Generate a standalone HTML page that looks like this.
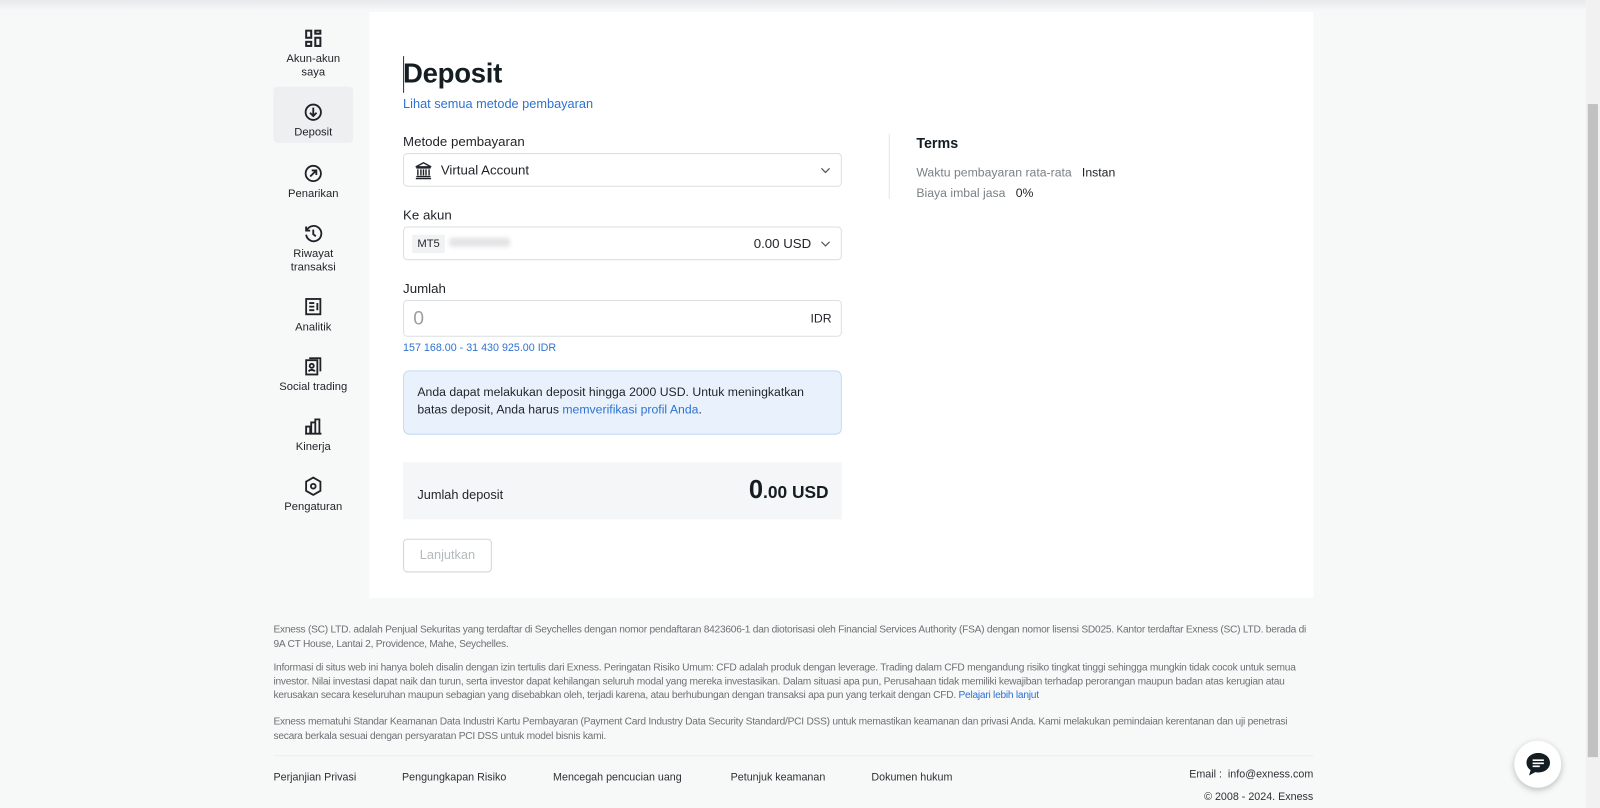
<!DOCTYPE html>
<html><head><meta charset="utf-8">
<style>
*{box-sizing:border-box;margin:0;padding:0}
body{width:1600px;height:808px;overflow:hidden;background:#f7f8f8;font-family:"Liberation Sans",sans-serif;color:#1f2328;position:relative}
#w{position:absolute;left:0;top:0;width:1568px;height:792px;transform:scale(1.0204);transform-origin:0 0}
.topbar{position:absolute;left:0;top:0;width:1554px;height:10px;background:linear-gradient(#e6e8e9,#f7f8f8)}
.scroll{position:absolute;right:0;top:0;width:14px;height:792px;background:#f1f1f1}
.thumb{position:absolute;right:2px;top:102px;width:10px;height:640px;background:#c1c1c1}
.side{position:absolute;left:268px;top:21px;width:78px}
.item{text-align:center;font-size:11px;color:#1f2328;line-height:13px;border-radius:4px;position:absolute;left:0;width:78px}
.item svg{display:block;margin:0 auto 5px}
.card{position:absolute;left:362px;top:12px;width:925px;height:574px;background:#fff}
h1{position:absolute;left:33px;top:45px;font-size:27px;font-weight:bold;color:#141d22;letter-spacing:-0.3px}
.caret{position:absolute;left:33px;top:43px;width:1px;height:36px;background:#333}
.link{color:#2e72d2}
.lbl{position:absolute;left:33px;font-size:13px;color:#1f2328}
.field{position:absolute;left:33px;width:430px;border:1px solid #dcdfe1;border-radius:4px;background:#fff}
.chev{position:absolute;right:10px;top:12px}
.terms{position:absolute;left:509px;top:119px;border-left:1px solid #e3e5e6;padding-left:26px;height:64px;font-size:12px;color:#7b8185}
.terms b{display:block;font-size:14px;color:#141d22;margin-bottom:14px;margin-top:1px}
.terms span{color:#1f2328}
.foot{position:absolute;left:268px;font-size:10px;color:#6c7175;line-height:13.5px;white-space:nowrap;letter-spacing:-0.25px}
.fl{position:absolute;top:756px;font-size:10.5px;color:#2d3236}
</style></head><body>
<div id="w">
<div class="topbar"></div>
<div class="scroll"><div class="thumb"></div></div>

<div class="side">
 <div class="item" style="top:8px"><svg width="16" height="18" viewBox="0 0 16 18" fill="none" stroke="#1f2328" stroke-width="2"><rect x="1" y="1" width="5" height="7"/><rect x="10" y="1" width="5" height="3"/><rect x="1" y="12" width="5" height="4"/><rect x="10" y="8" width="5" height="8"/></svg>Akun-akun<br>saya</div>
 <div class="item" style="top:64px;height:55px;background:#edeff0;padding-top:16px"><svg width="18" height="18" viewBox="0 0 18 18" fill="none" stroke="#1f2328" stroke-width="1.8"><circle cx="9" cy="9" r="7.5"/><path d="M9 4.5v8M5.8 9.5L9 12.7 12.2 9.5"/></svg>Deposit</div>
 <div class="item" style="top:140px"><svg width="18" height="18" viewBox="0 0 18 18" fill="none" stroke="#1f2328" stroke-width="1.8"><circle cx="9" cy="9" r="7.5"/><path d="M6 12L12 6M7.5 6H12v4.5"/></svg>Penarikan</div>
 <div class="item" style="top:199px"><svg width="18" height="18" viewBox="0 0 18 18" fill="none" stroke="#1f2328" stroke-width="1.8"><path d="M2.5 6A7.5 7.5 0 1 1 2 10"/><path d="M2 2v4h4M9 5v4.5l2.5 2"/></svg>Riwayat<br>transaksi</div>
 <div class="item" style="top:271px"><svg width="16" height="18" viewBox="0 0 16 18" fill="none" stroke="#1f2328" stroke-width="1.8"><rect x="1" y="1" width="14" height="15"/><path d="M4 5h5M4 8.5h5M4 12h5M12 5v7"/></svg>Analitik</div>
 <div class="item" style="top:329px"><svg width="16" height="18" viewBox="0 0 16 18" fill="none" stroke="#1f2328" stroke-width="1.8"><rect x="1" y="3" width="11" height="14"/><path d="M4 1h11v13"/><circle cx="6.5" cy="8.5" r="2"/><path d="M3.5 14c1-2 5-2 6 0"/></svg>Social trading</div>
 <div class="item" style="top:388px"><svg width="18" height="18" viewBox="0 0 18 18" fill="none" stroke="#1f2328" stroke-width="1.8"><path d="M1 16h16M2 16V9h4v7M7 16V5h4v11M11 16V2h4v14"/></svg>Kinerja</div>
 <div class="item" style="top:446px"><svg width="18" height="19" viewBox="0 0 18 19" fill="none" stroke="#1f2328" stroke-width="1.8"><path d="M9 1l7 4v9l-7 4-7-4V5z"/><circle cx="9" cy="9.5" r="2.3"/></svg>Pengaturan</div>
</div>

<div class="card">
 <div class="caret"></div>
 <h1>Deposit</h1>
 <div class="link" style="position:absolute;left:33px;top:83px;font-size:12.5px">Lihat semua metode pembayaran</div>

 <div class="lbl" style="top:119px">Metode pembayaran</div>
 <div class="field" style="top:138px;height:33px">
  <svg style="position:absolute;left:10px;top:7px" width="18" height="18" viewBox="0 0 18 18" fill="none" stroke="#1f2328" stroke-width="1.4"><path d="M1.5 5.5L9 1.5l7.5 4zM2 6.5h14M3.5 8v6M6.5 8v6M9 8v6M11.5 8v6M14.5 8v6M2 15h14M1.5 17h15"/></svg>
  <span style="position:absolute;left:36px;top:8px;font-size:13px">Virtual Account</span>
  <svg class="chev" width="10" height="8" viewBox="0 0 10 8" fill="none" stroke="#555" stroke-width="1.2"><path d="M1 2l4 4 4-4"/></svg>
 </div>

 <div class="lbl" style="top:191px">Ke akun</div>
 <div class="field" style="top:210px;height:33px">
  <span style="position:absolute;left:8px;top:7px;background:#f1f2f3;font-size:11px;padding:3px 5px">MT5</span>
  <span style="position:absolute;left:44px;top:10px;width:60px;height:9px;background:#e3e4e6;filter:blur(2px);border-radius:3px"></span>
  <span style="position:absolute;right:29px;top:8px;font-size:13px">0.00 USD</span>
  <svg class="chev" width="10" height="8" viewBox="0 0 10 8" fill="none" stroke="#555" stroke-width="1.2"><path d="M1 2l4 4 4-4"/></svg>
 </div>

 <div class="lbl" style="top:263px">Jumlah</div>
 <div class="field" style="top:282px;height:36px">
  <span style="position:absolute;left:9px;top:7px;font-size:19px;color:#9aa0a4">0</span>
  <span style="position:absolute;right:9px;top:10px;font-size:12px">IDR</span>
 </div>
 <div class="link" style="position:absolute;left:33px;top:323px;font-size:10.5px">157 168.00 - 31 430 925.00 IDR</div>

 <div style="position:absolute;left:33px;top:351px;width:430px;height:63px;background:#e9f2fc;border:1px solid #c2dbf5;border-radius:6px;padding:12px 13px;font-size:12px;line-height:17px;color:#1f2328">Anda dapat melakukan deposit hingga 2000 USD. Untuk meningkatkan batas deposit, Anda harus <span class="link">memverifikasi profil Anda</span>.</div>

 <div style="position:absolute;left:33px;top:441px;width:430px;height:56px;background:#f5f6f7">
  <span style="position:absolute;left:14px;top:25px;font-size:12.5px">Jumlah deposit</span>
  <span style="position:absolute;right:13px;top:13px;font-weight:bold;color:#141d22"><span style="font-size:25px">0</span><span style="font-size:17px">.00 USD</span></span>
 </div>

 <div style="position:absolute;left:33px;top:516px;width:87px;height:33px;border:1px solid #d3d6d8;border-radius:4px;font-size:12.5px;color:#b5babd;text-align:center;line-height:31px">Lanjutkan</div>

 <div class="terms"><b>Terms</b>Waktu pembayaran rata-rata &nbsp; <span>Instan</span><div style="margin-top:6px">Biaya imbal jasa &nbsp; <span>0%</span></div></div>
</div>

<div class="foot" style="top:611px">Exness (SC) LTD. adalah Penjual Sekuritas yang terdaftar di Seychelles dengan nomor pendaftaran 8423606-1 dan diotorisasi oleh Financial Services Authority (FSA) dengan nomor lisensi SD025. Kantor terdaftar Exness (SC) LTD. berada di<br>9A CT House, Lantai 2, Providence, Mahe, Seychelles.</div>
<div class="foot" style="top:648px">Informasi di situs web ini hanya boleh disalin dengan izin tertulis dari Exness. Peringatan Risiko Umum: CFD adalah produk dengan leverage. Trading dalam CFD mengandung risiko tingkat tinggi sehingga mungkin tidak cocok untuk semua<br>investor. Nilai investasi dapat naik dan turun, serta investor dapat kehilangan seluruh modal yang mereka investasikan. Dalam situasi apa pun, Perusahaan tidak memiliki kewajiban terhadap perorangan maupun badan atas kerugian atau<br>kerusakan secara keseluruhan maupun sebagian yang disebabkan oleh, terjadi karena, atau berhubungan dengan transaksi apa pun yang terkait dengan CFD. <span style="color:#2e72d2">Pelajari lebih lanjut</span></div>
<div class="foot" style="top:701px">Exness mematuhi Standar Keamanan Data Industri Kartu Pembayaran (Payment Card Industry Data Security Standard/PCI DSS) untuk memastikan keamanan dan privasi Anda. Kami melakukan pemindaian kerentanan dan uji penetrasi<br>secara berkala sesuai dengan persyaratan PCI DSS untuk model bisnis kami.</div>
<div style="position:absolute;left:268px;top:740px;width:1019px;height:1px;background:#eceeef"></div>
<div class="fl" style="left:268px">Perjanjian Privasi</div>
<div class="fl" style="left:394px">Pengungkapan Risiko</div>
<div class="fl" style="left:542px">Mencegah pencucian uang</div>
<div class="fl" style="left:716px">Petunjuk keamanan</div>
<div class="fl" style="left:854px">Dokumen hukum</div>
<div style="position:absolute;right:281px;top:753px;font-size:10.5px;color:#2d3236">Email : &nbsp;info@exness.com</div>
<div style="position:absolute;right:281px;top:775px;font-size:10.5px;color:#2d3236">© 2008 - 2024. Exness</div>

<div style="position:absolute;left:1484px;top:726px;width:46px;height:46px;border-radius:50%;background:#fff;box-shadow:0 2px 6px rgba(0,0,0,.25)">
 <svg style="position:absolute;left:11px;top:11px" width="25" height="25" viewBox="0 0 25 25"><path d="M12.5 1C6 1 1 5 1 10.5c0 3 1.5 5.5 4 7.2L3.5 23l6-3.3c1 .2 2 .3 3 .3C19 20 24 16 24 10.5S19 1 12.5 1z" fill="#141d22"/><path d="M7 8h11M7 11h11M7 14h7" stroke="#fff" stroke-width="1.6"/></svg>
</div>
</div>
</body></html>
